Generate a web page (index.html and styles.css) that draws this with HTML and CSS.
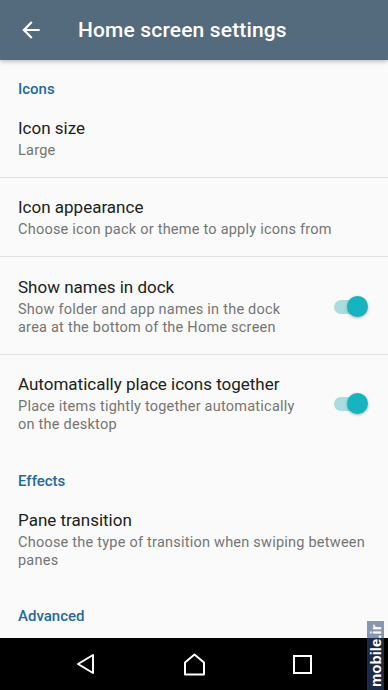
FILE: index.html
```html
<!DOCTYPE html>
<html>
<head>
<meta charset="utf-8">
<link rel="stylesheet" href="styles.css">
</head>
<body>
<div class="screen">
  <header class="appbar">
    <svg class="back" width="26" height="26" viewBox="0 0 24 24"><path d="M20 11H7.83l5.59-5.59L12 4l-8 8 8 8 1.41-1.41L7.83 13H20v-2z" fill="#fff"/></svg>
    <h1 class="title">Home screen settings</h1>
  </header>
  <main class="content">
    <div class="category first">Icons</div>
    <div class="item">
      <div class="text">
        <div class="item-title">Icon size</div>
        <div class="item-sub">Large</div>
      </div>
    </div>
    <div class="divider"></div>
    <div class="item">
      <div class="text">
        <div class="item-title">Icon appearance</div>
        <div class="item-sub">Choose icon pack or theme to apply icons from</div>
      </div>
    </div>
    <div class="divider"></div>
    <div class="item tall">
      <div class="text narrow">
        <div class="item-title">Show names in dock</div>
        <div class="item-sub">Show folder and app names in the dock area at the bottom of the Home screen</div>
      </div>
      <div class="widget"><span class="switch"><span class="thumb"></span></span></div>
    </div>
    <div class="divider"></div>
    <div class="item">
      <div class="text narrow">
        <div class="item-title">Automatically place icons together</div>
        <div class="item-sub">Place items tightly together automatically on the desktop</div>
      </div>
      <div class="widget"><span class="switch"><span class="thumb"></span></span></div>
    </div>
    <div class="category">Effects</div>
    <div class="item">
      <div class="text">
        <div class="item-title">Pane transition</div>
        <div class="item-sub">Choose the type of transition when swiping between panes</div>
      </div>
    </div>
    <div class="category last">Advanced</div>
  </main>
  <nav class="navbar">
    <div class="nav-cell">
      <svg width="20" height="22" viewBox="0 0 20 22"><path d="M17 2 L17 20 L2 11 Z" fill="none" stroke="#fff" stroke-width="2" stroke-linejoin="round"/></svg>
    </div>
    <div class="nav-cell">
      <svg width="23" height="23" viewBox="0 0 23 23"><path d="M2 9.5 L11.5 1.5 L21 9.5 L21 21.5 L2 21.5 Z" fill="none" stroke="#fff" stroke-width="2" stroke-linejoin="round"/></svg>
    </div>
    <div class="nav-cell">
      <svg width="19" height="19" viewBox="0 0 19 19"><rect x="1" y="1" width="17" height="17" fill="none" stroke="#fff" stroke-width="2"/></svg>
    </div>
  </nav>
  <div class="watermark">mobile.ir</div>
</div>
</body>
</html>
```

FILE: styles.css
```css
html, body {
  margin: 0;
  padding: 0;
}
body {
  background: #fafafa;
  font-family: Roboto, "Noto Sans", "Liberation Sans", sans-serif;
}
.screen {
  position: relative;
  width: 388px;
  height: 690px;
  display: flex;
  flex-direction: column;
  overflow: hidden;
  background: #fafafa;
}
.appbar {
  position: relative;
  z-index: 2;
  height: 60px;
  flex: 0 0 60px;
  background: #546a7d;
  display: flex;
  align-items: center;
  box-shadow: 0 2px 4px rgba(0, 0, 0, 0.22);
}
.back {
  margin-left: 18px;
  margin-top: -1px;
}
.title {
  margin: -1px 0 0 34px;
  font-size: 21px;
  font-weight: 500;
  color: #fff;
  letter-spacing: 0.15px;
}
.content {
  flex: 1;
  overflow: hidden;
}
.category {
  padding: 20px 18px 0;
  line-height: 20px;
  font-size: 15px;
  font-weight: 500;
  color: #1f6aa5;
}
.category.first {
  padding-top: 19px;
}
.category.last {
  padding-top: 19px;
}
.item {
  display: flex;
  align-items: center;
  padding: 18px 18px 17px;
}
.item.tall {
  padding-top: 19px;
}
.text {
  flex: 1;
  min-width: 0;
}
.text.narrow {
  flex: 0 0 288px;
}
.item-title {
  font-size: 17px;
  line-height: 22px;
  color: #212121;
}
.item-sub {
  margin-top: 3px;
  font-size: 14.5px;
  letter-spacing: 0.23px;
  line-height: 18px;
  color: #757575;
}
.divider {
  height: 1px;
  background: #e0e0e0;
}
.widget {
  flex: 1;
  display: flex;
  justify-content: flex-end;
  padding-right: 3px;
}
.switch {
  position: relative;
  display: block;
  width: 33px;
  height: 14px;
  border-radius: 7px;
  background: #a9dde0;
}
.thumb {
  position: absolute;
  right: -1px;
  top: -4px;
  width: 21px;
  height: 21px;
  border-radius: 50%;
  background: #16b4be;
  box-shadow: 0 1px 3px rgba(0, 0, 0, 0.3);
}
.navbar {
  flex: 0 0 52px;
  height: 52px;
  background: #000;
  display: flex;
  justify-content: center;
  align-items: center;
  gap: 48px;
}
.nav-cell {
  width: 60px;
  display: flex;
  justify-content: center;
  align-items: center;
}
.watermark {
  position: absolute;
  right: 4px;
  bottom: 0;
  width: 17px;
  height: 69px;
  background: rgba(50, 74, 121, 0.57);
  color: #fff;
  font-family: "Liberation Sans", Arial, sans-serif;
  font-weight: bold;
  font-size: 15px;
  writing-mode: vertical-rl;
  transform: rotate(180deg);
  display: flex;
  align-items: center;
  justify-content: center;
  line-height: 17px;
}
```
